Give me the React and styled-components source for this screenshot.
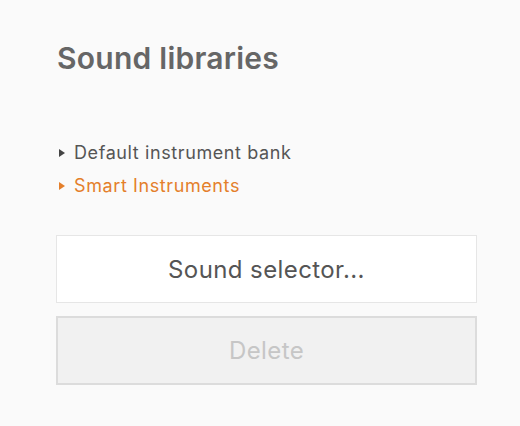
import React from "react";
import styled, { createGlobalStyle } from "styled-components";

const Global = createGlobalStyle`
  html, body { margin: 0; padding: 0; background: #fafafa; }
  body { font-family: Inter, "Noto Sans", sans-serif; }
`;

const Page = styled.div`
  padding: 39px 43px 0 56px;
  display: flex;
  flex-direction: column;
`;

const Title = styled.h1`
  margin: 0 0 0 1px;
  font-size: 30px;
  line-height: 38px;
  font-weight: 600;
  letter-spacing: 0.25px;
  color: #666;
`;

const List = styled.ul`
  list-style: none;
  margin: 65px 0 0 0;
  padding: 0;
  display: flex;
  flex-direction: column;
  gap: 11px;
`;

const Item = styled.li`
  display: flex;
  align-items: center;
  gap: 9px;
  font-size: 18px;
  line-height: 22px;
  letter-spacing: 0.6px;
  color: ${p => (p.$active ? "#e47f2b" : "#555")};
  padding-left: 3px;
`;

const Tri = styled.span`
  width: 0;
  height: 0;
  border-top: 4.5px solid transparent;
  border-bottom: 4.5px solid transparent;
  border-left: 6px solid ${p => (p.$active ? "#e47f2b" : "#444")};
`;

const Buttons = styled.div`
  margin-top: 38px;
  display: flex;
  flex-direction: column;
  gap: 13px;
`;

const Button = styled.button`
  height: ${p => (p.$disabled ? "69px" : "68px")};
  box-sizing: border-box;
  font-family: inherit;
  font-size: 24px;
  letter-spacing: 0.4px;
  background: ${p => (p.$disabled ? "#f1f1f1" : "#fff")};
  border: ${p => (p.$disabled ? "2px solid #dcdcdc" : "1px solid #e6e6e6")};
  color: ${p => (p.$disabled ? "#c6c6c6" : "#555")};
  padding: 0;
  cursor: default;
`;

export default function App() {
  return (
    <>
      <Global />
      <Page>
        <Title>Sound libraries</Title>
        <List>
          <Item><Tri />Default instrument bank</Item>
          <Item $active><Tri $active />Smart Instruments</Item>
        </List>
        <Buttons>
          <Button>Sound selector...</Button>
          <Button $disabled disabled>Delete</Button>
        </Buttons>
      </Page>
    </>
  );
}
